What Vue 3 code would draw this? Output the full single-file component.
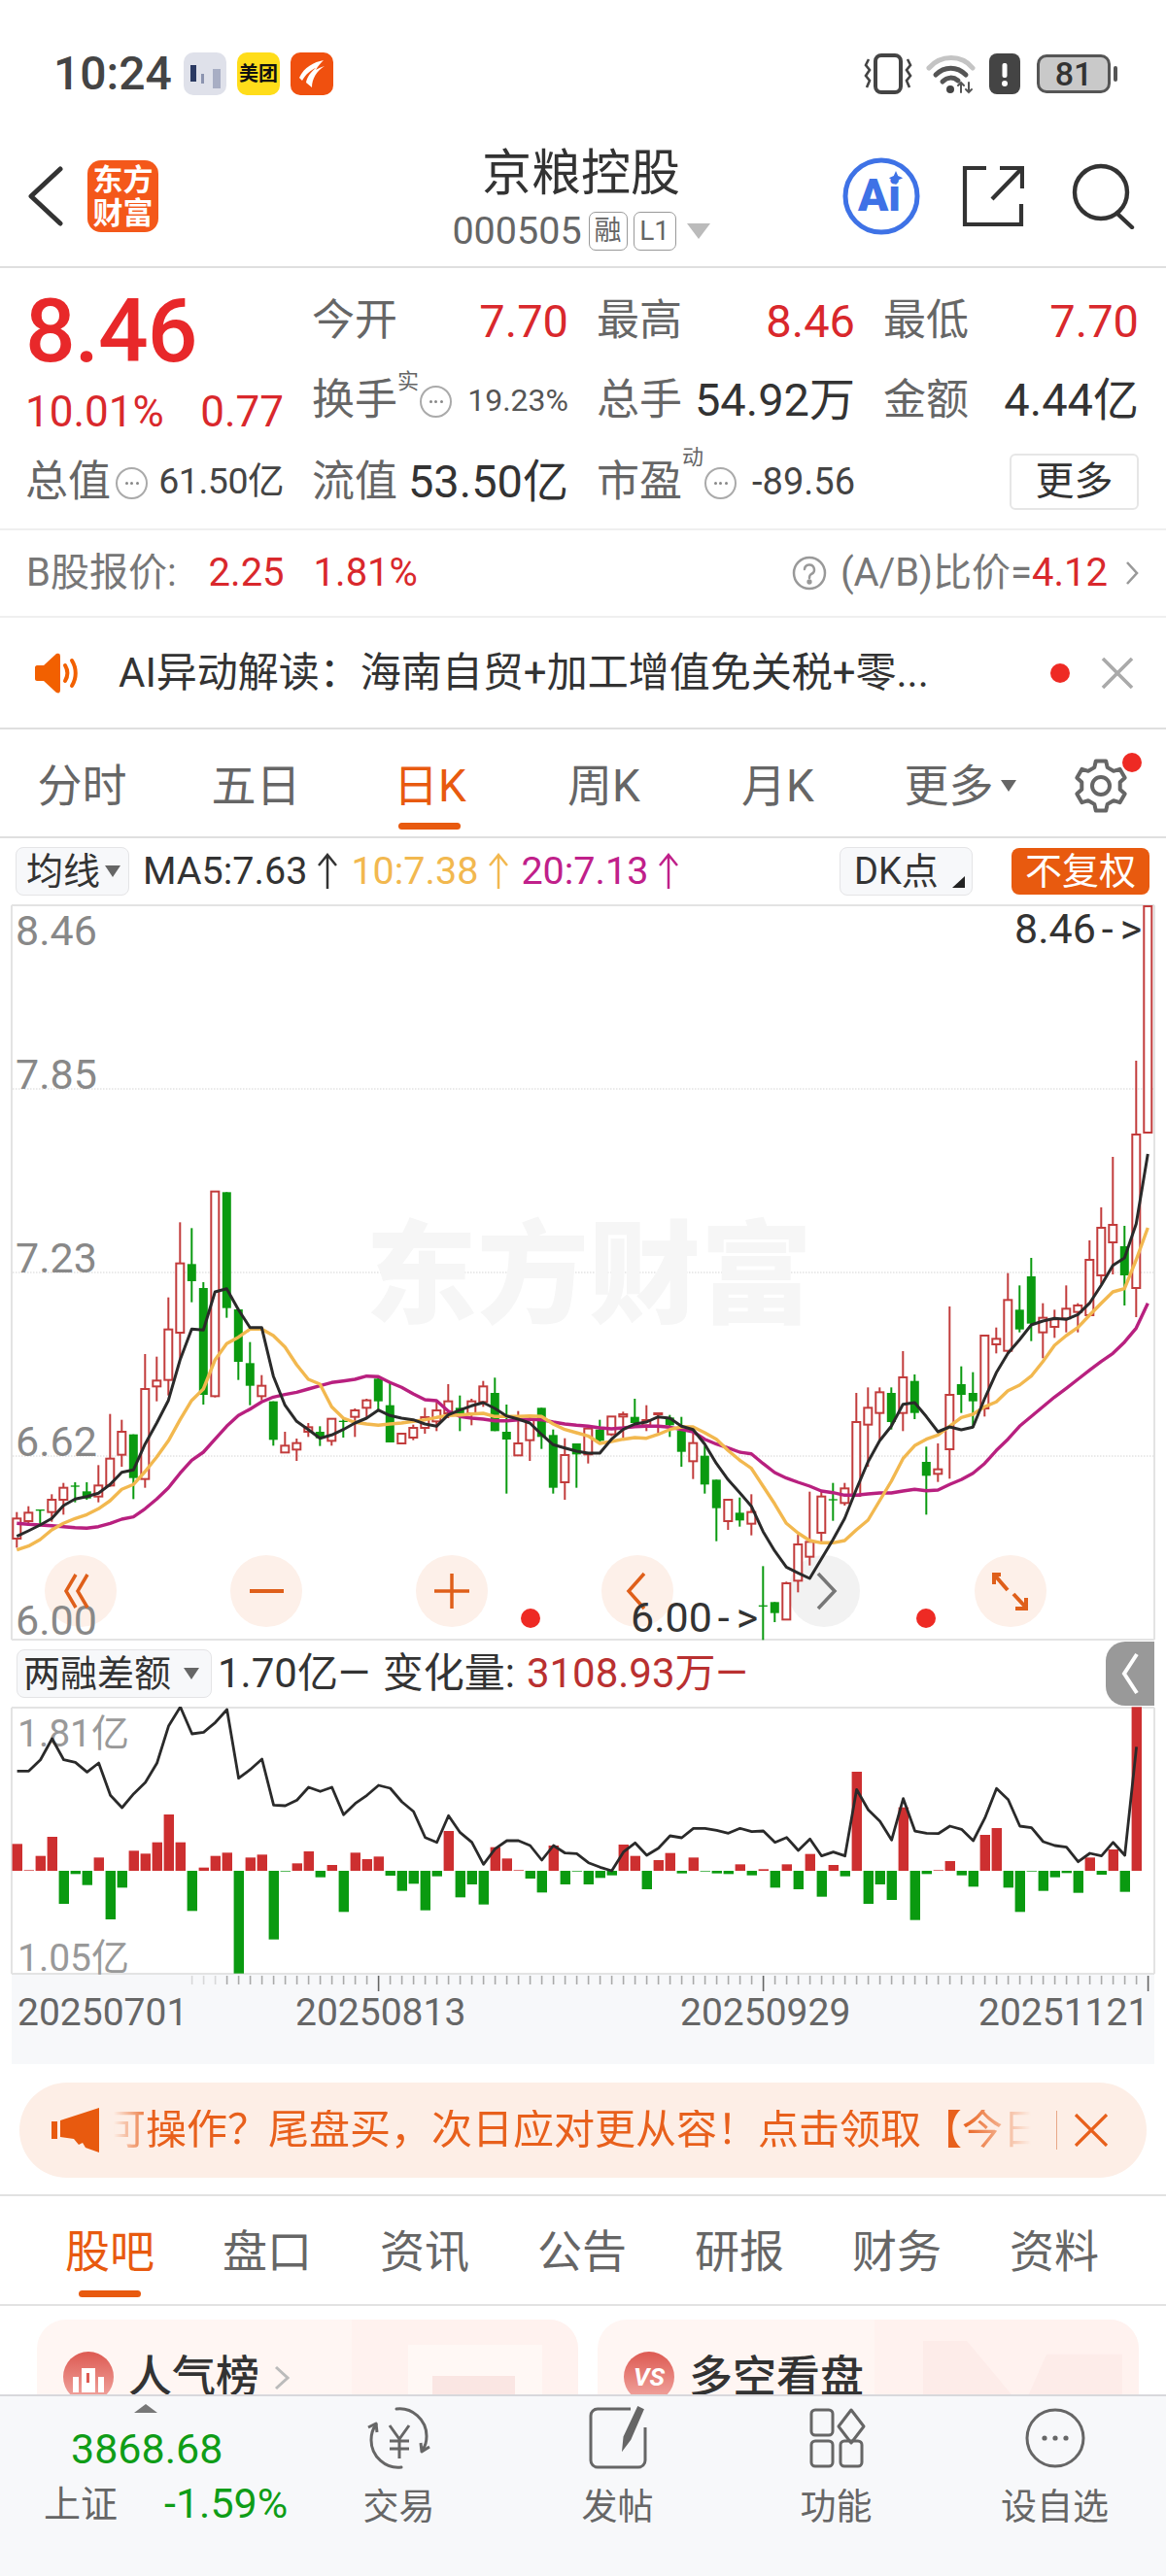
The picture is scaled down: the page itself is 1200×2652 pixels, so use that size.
<script setup>
const seg8 = [
  ['r',1010,1030,1092,1120],['r',992,1012,1038,1052],['g',1002,1002,1006,1050],['r',955,972,1010,1040],
  ['r',920,935,972,1018],['g',918,928,932,980],['g',918,946,968,972],['r',865,928,962,980],
  ['r',707,845,928,932],['r',725,762,833,870],['g',770,770,905,970],['r',522,630,908,935],
  ['r',530,604,622,668],['r',347,446,602,650],['r',115,242,456,540],['g',133,244,297,362],
  ['g',300,318,648,678],['r',20,20,652,656],['g',22,22,380,410],['g',380,384,546,602],
  ['g',485,550,620,680],['r',587,620,652,665],['g',668,668,787,805],['r',762,805,826,826],
  ['r',783,797,817,852],['r',735,748,762,778],['g',745,762,782,806],['r',722,722,790,805],
  ['g',722,728,732,780],['r',690,696,716,778],['r',660,665,688,720],['g',595,598,668,700],
  ['g',610,680,795,795]
]
const seg9 = [
  ['r',348,348,378,378],['r',320,330,360,368],['r',268,297,330,348],['r',250,276,310,340],
  ['r',195,248,285,300],['g',230,268,285,340],['r',240,248,285,322],['r',185,202,250,265],
  ['g',175,222,340,340],['g',258,342,366,533],['r',278,378,415,415],['r',290,305,368,432],
  ['g',268,268,358,395],['g',335,352,515,533],['r',362,414,498,552],['g',378,378,412,515],
  ['r',330,332,412,440],['g',305,335,370,375],['r',295,295,350,355],['r',280,288,295,360],
  ['g',240,296,315,330],['r',260,306,322,340],['r',285,285,288,345],['g',290,298,322,358],
  ['g',296,338,404,450],['r',335,377,433,488],['g',385,416,505,533],['g',490,490,578,680],
  ['r',552,552,618,645],['g',545,592,616,635],['r',535,590,626,662],['g',757,878,882,985]
]
const seg10 = [
  ['g',1108,1108,1142,1170],['r',1045,1050,1162,1162],['r',900,930,1042,1078],['r',767,922,968,995],
  ['r',768,782,894,925],['g',740,790,794,857],['r',740,757,802,810],['r',462,552,780,780],
  ['r',445,508,560,690],['r',445,460,524,610],['g',445,462,552,575],['r',333,414,524,580],
  ['g',405,425,524,543],['g',628,675,718,838],['r',618,698,712,737],['r',195,468,636,727],
  ['g',380,435,468,524],['g',398,462,488,570],['r',285,285,510,535],['r',260,295,312,340],
  ['r',92,175,332,340],['g',130,205,266,275],['g',45,102,248,302],['r',185,230,275,355],
  ['r',205,235,258,292],['r',130,202,232,275],['r',185,192,212,275]
]
const rawEnd = [
  ['r',1277,1297,1354,1354],['r',1243,1264,1313,1322],['r',1191,1261,1279,1312],['g',1262,1283,1313,1344],
  ['r',1092,1168,1326,1356],['r',933,933,1166,1166]
]
const conv = (list, off) => list.map(c => [c[0], off + c[1] / 3, off + c[2] / 3, off + c[3] / 3, off + c[4] / 3])
const candles = [...conv(seg8, 1220), ...conv(seg9, 1360), ...conv(seg10, 1280), ...rawEnd].map((c, i) => ({
  up: c[0] === 'r', x: 17.3 + 12 * i, wt: c[1], bt: c[2], bb: c[3], wb: c[4]
}))

const line = (a, b, c) => [
  ...a.map(v => 1220 + v / 3), ...b.map(v => 1360 + v / 3), ...c.map(v => 1280 + v / 3)
].map((y, i) => `${(17.3 + 12 * i).toFixed(1)},${y.toFixed(1)}`).join(' ')

const ma5 = line(
  [1085,1068,1050,1030,990,970,962,952,925,887,880,800,735,665,540,445,448,330,320,385,440,440,590,680,730,755,782,772,755,735,720,695,712],
  [300,305,318,325,290,275,262,252,270,293,303,315,350,382,392,402,408,408,365,335,318,312,296,300,325,335,380,440,490,530,572,650],
  [950,1000,1018,1035,975,915,850,760,675,610,565,497,492,535,582,567,576,568,480,400,340,298,252,240,232,235,220,185,130,68,45,-60,-276]
)
const ma10 = line(
  [1127,1115,1095,1065,1045,1030,1018,1000,975,940,925,885,840,790,725,665,630,540,490,470,445,445,465,500,555,600,615,685,720,733,738,742,738],
  [315,310,305,298,292,290,287,285,295,295,295,293,295,318,335,345,355,378,372,365,360,362,350,335,327,327,345,365,400,430,455,510],
  [805,865,895,918,925,925,918,885,855,795,735,665,625,605,592,565,538,528,505,490,455,438,410,365,315,285,260,222,185,150,140,51,-48]
)
const ma20 = line(
  [1045,1048,1050,1052,1055,1058,1060,1055,1045,1032,1025,1000,970,935,890,850,825,785,745,712,692,670,655,647,640,630,620,610,605,600,590,592,610],
  [205,225,243,246,278,295,300,303,308,308,305,303,305,312,318,322,325,330,333,330,326,325,325,328,335,342,365,380,392,405,410,440],
  [708,725,738,750,765,770,778,778,774,771,771,765,760,764,762,745,730,710,680,640,605,565,535,505,475,448,420,392,365,340,305,262,185]
)

const barVals = [83,2,46,105,-102,-10,-44,41,-150,-52,62,53,88,174,88,-124,10,46,56,-317,41,50,-212,-2,23,60,-20,18,-127,56,36,44,-15,-62,-40,-122,-17,123,-82,-42,-104,73,38,2,-24,-67,78,-42,-2,-42,-22,-14,81,46,-57,33,55,-8,41,-2,-8,-10,20,-14,5,-52,20,-57,52,-80,18,-17,306,-102,-42,-90,196,-152,-10,2,30,-14,-49,111,132,-52,-127,-2,-62,-20,-7,-68,41,-12,66,-65,506]
const bars = barVals.map((v, i) => ({
  x: 12.6 + 12 * i, y: v > 0 ? 1926 - v / 3 : 1926, h: Math.abs(v) / 3, up: v > 0
}))
const lowY = [430,430,395,330,395,403,433,405,505,543,500,465,405,290,232,315,310,280,240,452,425,393,535,537,520,480,493,480,565,530,505,474,483,525,555,635,650,568,620,650,718,670,645,645,660,705,660,683,685,713,727,738,680,652,690,668,630,636,607,607,613,622,607,617,615,650,635,675,640,692,680,692,487,550,585,643,515,615,622,623,600,610,645,575,484,518,600,605,648,660,665,710,684,692,650,690,355]
const lowLine = lowY.map((v, i) => `${(17.6 + 12 * i).toFixed(1)},${(1680 + v / 3).toFixed(1)}`).join(' ')

const ticks = Array.from({ length: 83 }, (_, k) => {
  const i = k + 15
  const major = i === 31 || i === 64 || i === 97
  return { x: 17.6 + 12 * i, major, faded: i < 18 }
})

const gearPath = (() => {
  const n = 6, cx = 30, cy = 30, ro = 26, ri = 20
  const pts = []
  for (let k = 0; k < n; k++) {
    const a = (k * 2 * Math.PI) / n - Math.PI / 2
    const w1 = 0.2, w2 = 0.34
    pts.push([a - w2, ri], [a - w1, ro], [a + w1, ro], [a + w2, ri])
  }
  return 'M' + pts.map(p => `${(cx + p[1] * Math.cos(p[0])).toFixed(1)} ${(cy + p[1] * Math.sin(p[0])).toFixed(1)}`).join('L') + 'Z'
})()

const klineTabs = ['分时', '五日', '日K', '周K', '月K']
const infoTabs = ['股吧', '盘口', '资讯', '公告', '研报', '财务', '资料']
const navs = ['交易', '发帖', '功能', '设自选']
const zoomButtons = [83, 274, 465, 656, 848, 1040]
</script>

<template>
  <div class="page">
    <!-- status bar -->
    <div class="status">
      <span class="time">10:24</span>
      <svg class="app" width="44" height="44" viewBox="0 0 44 44">
        <rect width="44" height="44" rx="10" fill="#dfe1ea"/>
        <rect x="7" y="13" width="6" height="17" fill="#2b3a63"/>
        <rect x="18" y="22" width="3" height="10" fill="#8c94b0"/>
        <rect x="30" y="17" width="8" height="20" fill="#a8aec4"/>
      </svg>
      <span class="app app-mt">美团</span>
      <svg class="app" width="44" height="44" viewBox="0 0 44 44">
        <rect width="44" height="44" rx="10" fill="#f0500f"/>
        <path d="M34 8C24 10 14 15 9 26l3 3c4-7 9-11 14-13-5 4-9 9-10 15l6 5c0-9 5-17 13-22-4 1-7 3-9 4 2-4 5-7 8-10z" fill="#fff"/>
      </svg>
      <span class="status-fill"></span>
      <svg width="50" height="42" viewBox="0 0 50 42" fill="none" stroke="#444" stroke-width="3.2">
        <rect x="12" y="2" width="26" height="38" rx="6" stroke-width="4"/>
        <path d="M5 6 2 12l4 5-4 6 4 5-3 7M45 6l3 6-4 5 4 6-4 5 3 7" stroke-width="2.6"/>
      </svg>
      <svg class="wifi" width="52" height="42" viewBox="0 0 52 42" fill="none" stroke-linecap="round">
        <path d="M3 15C15 1 37 1 48 15" stroke="#c4c4c4" stroke-width="5"/>
        <path d="M10 22c9-9 22-9 31 0" stroke="#555" stroke-width="5"/>
        <path d="M17 29c5-5 11-5 16-1" stroke="#555" stroke-width="5"/>
        <circle cx="25" cy="37" r="4" fill="#444"/>
        <path d="M36 40V30M44 30v10M33 33l3-3 3 3M41 37l3 3 3-3" stroke="#555" stroke-width="2"/>
      </svg>
      <svg class="alert" width="34" height="42" viewBox="0 0 34 42">
        <path d="M9 0h16a8 8 0 0 1 8 8v26a8 8 0 0 1-8 8H9a8 8 0 0 1-8-8V8a8 8 0 0 1 8-8z" fill="#444"/>
        <rect x="14.5" y="10" width="5" height="15" rx="2" fill="#fff"/>
        <circle cx="17" cy="31" r="3" fill="#fff"/>
      </svg>
      <span class="battery"><span class="battery-num">81</span></span>
      <span class="battery-nub"></span>
    </div>

    <!-- header -->
    <header class="header">
      <div class="header-left">
        <svg width="40" height="62" viewBox="0 0 40 62" fill="none" stroke="#333" stroke-width="5" stroke-linecap="round" stroke-linejoin="round"><path d="M35 3 5 31l30 28"/></svg>
        <div class="logo"><span>东方</span><span>财富</span></div>
      </div>
      <div class="header-mid">
        <div class="title">京粮控股</div>
        <div class="sub">
          <span>000505</span>
          <span class="tag tag-a">融</span>
          <span class="tag">L1</span>
          <span class="tri-down"></span>
        </div>
      </div>
      <div class="header-right">
        <svg width="82" height="82" viewBox="0 0 82 82">
          <circle cx="41" cy="41" r="37" fill="none" stroke="#3e72e6" stroke-width="5"/>
          <text x="17" y="56" class="ai">Ai</text>
          <path d="M56 15l2.2 5 5 2.2-5 2.2-2.2 5-2.2-5-5-2.2 5-2.2z" fill="#3e72e6"/>
        </svg>
        <svg class="share" width="64" height="64" viewBox="0 0 64 64" fill="none" stroke="#333" stroke-width="4.2">
          <path d="M25 3H3v58h58V40"/>
          <path d="M31 35 61 4M39 3h23v21"/>
        </svg>
        <svg class="search" width="66" height="68" viewBox="0 0 66 68" fill="none" stroke="#333" stroke-width="4.4" stroke-linecap="round">
          <circle cx="30" cy="30" r="27"/>
          <path d="M47 52l15 14"/>
        </svg>
      </div>
    </header>

    <!-- quote -->
    <section class="quote">
      <div class="price"><span>8.46</span></div>
      <div class="cell"><span class="lb">今开</span><span class="val red">7.70</span></div>
      <div class="cell"><span class="lb">最高</span><span class="val red">8.46</span></div>
      <div class="cell"><span class="lb">最低</span><span class="val red">7.70</span></div>

      <div class="cell change"><span class="red">10.01%</span><span class="red">0.77</span></div>
      <div class="cell">
        <span class="lb-wrap"><span class="lb">换手</span><sup class="sup">实</sup><span class="dots"><i></i><i></i><i></i></span></span>
        <span class="small">19.23%</span>
      </div>
      <div class="cell"><span class="lb">总手</span><span class="val dark">54.92万</span></div>
      <div class="cell"><span class="lb">金额</span><span class="val dark">4.44亿</span></div>

      <div class="cell">
        <span class="lb-wrap"><span class="lb">总值</span><span class="dots tight"><i></i><i></i><i></i></span></span>
        <span class="small mv">61.50亿</span>
      </div>
      <div class="cell"><span class="lb">流值</span><span class="val dark">53.50亿</span></div>
      <div class="cell">
        <span class="lb-wrap"><span class="lb">市盈</span><sup class="sup up">动</sup><span class="dots"><i></i><i></i><i></i></span></span>
        <span class="small pe">-89.56</span>
      </div>
      <div class="cell end"><span class="more">更多</span></div>
    </section>

    <!-- B share -->
    <section class="bshare">
      <span class="b-label">B股报价:</span>
      <span class="b-val">2.25</span>
      <span class="b-val b-pct">1.81%</span>
      <span class="spring"></span>
      <svg width="36" height="36" viewBox="0 0 36 36" fill="none" stroke="#999" stroke-width="2.5"><circle cx="18" cy="18" r="16"/><path d="M13 14a5 5 0 1 1 7 5c-2 1-2 2-2 4" stroke-linecap="round"/><circle cx="18" cy="27" r="1.4" fill="#999"/></svg>
      <span class="b-label b-ratio">(A/B)比价=</span><span class="b-val b-r">4.12</span>
      <svg class="b-chev" width="14" height="26" viewBox="0 0 14 26" fill="none" stroke="#999" stroke-width="2.6"><path d="M2 2l10 11L2 24"/></svg>
    </section>

    <!-- AI notice -->
    <section class="ainote">
      <svg width="50" height="42" viewBox="0 0 50 42" fill="#f26000">
        <path d="M2 13h7L22 1c3-1 4 0 4 3v34c0 3-1 4-4 3L9 29H2c-1 0-2-1-2-2V15c0-1 1-2 2-2z"/>
        <path d="M31 13c3 5 3 11 0 16M38 8c5 8 5 18 0 26" fill="none" stroke="#f26000" stroke-width="4" stroke-linecap="round"/>
      </svg>
      <span class="ai-text">AI异动解读：海南自贸+加工增值免关税+零...</span>
      <span class="spring"></span>
      <span class="red-dot"></span>
      <svg class="ai-x" width="34" height="32" viewBox="0 0 34 32" stroke="#aaa" stroke-width="3.6"><path d="M2 1l30 30M32 1 2 31"/></svg>
    </section>

    <!-- kline tabs -->
    <nav class="tabs">
      <span v-for="(t, i) in klineTabs" :key="t" class="tab" :class="{ on: i === 2 }">{{ t }}</span>
      <span class="tab more-tab">更多<i class="tri-small"></i></span>
      <span class="gear">
        <svg width="60" height="60" viewBox="0 0 60 60" fill="none" stroke="#666" stroke-width="4" stroke-linejoin="round">
          <path :d="gearPath"/><circle cx="30" cy="30" r="9"/>
        </svg>
        <span class="gear-dot"></span>
      </span>
    </nav>

    <!-- MA row -->
    <div class="ma-row">
      <span class="pick">均线<i class="tri-small dk"></i></span>
      <span class="ma ma-k">MA5:7.63<svg class="up-arrow" width="24" height="40" viewBox="0 0 24 40" fill="none" stroke="currentColor" stroke-width="2.5"><path d="M12 38V4M3 14l9-11 9 11"/></svg></span>
      <span class="ma ma-o">10:7.38<svg class="up-arrow" width="24" height="40" viewBox="0 0 24 40" fill="none" stroke="currentColor" stroke-width="2.5"><path d="M12 38V4M3 14l9-11 9 11"/></svg></span>
      <span class="ma ma-m">20:7.13<svg class="up-arrow" width="24" height="40" viewBox="0 0 24 40" fill="none" stroke="currentColor" stroke-width="2.5"><path d="M12 38V4M3 14l9-11 9 11"/></svg></span>
      <span class="spring"></span>
      <span class="pick dk-btn">DK点<i class="corner"></i></span>
      <span class="fq">不复权</span>
    </div>

    <!-- main chart -->
    <svg class="chart" width="1200" height="758" viewBox="0 931 1200 758">
      <path d="M12 932H1188M12 932V1688M1188 932V1688M12 1688H1188" fill="none" stroke="#e3e3e3" stroke-width="2"/>
      <g stroke="#d4d4d4" stroke-width="1" stroke-dasharray="1.5 1.5">
        <path d="M13 1121H1187M13 1310H1187M13 1499H1187"/>
      </g>
      <text x="376" y="1353" class="wm">东方财富</text>
      <text x="16" y="973" class="yl">8.46</text>
      <text x="16" y="1121" class="yl">7.85</text>
      <text x="16" y="1310" class="yl">7.23</text>
      <text x="16" y="1499" class="yl">6.62</text>
      <g>
        <circle v-for="(cx, i) in zoomButtons" :key="cx" :cx="cx" cy="1638" r="37" :fill="i === 4 ? '#f2f2f2' : '#fdf0e9'"/>
      </g>
      <text x="16" y="1683" class="yl">6.00</text>
      <g fill="none" stroke="#df5f1a" stroke-width="3.5">
        <path d="M78 1621 68 1638l10 17M90 1621 80 1638l10 17"/>
        <path d="M257 1638h35" stroke-width="4"/>
        <path d="M447 1638h36M465 1620v36"/>
        <path d="M663 1620 647 1638l16 18"/>
        <path d="M1023 1622v-1l7 0M1023 1621v10M1024 1622l13 15M1043 1641l13 14M1056 1645v11h-11" stroke-width="4"/>
      </g>
      <path d="M842 1620l17 18-17 18" fill="none" stroke="#777" stroke-width="3.5"/>
      <g v-for="(c, i) in candles" :key="i" :stroke="c.up ? '#c23c3c' : '#0a9a10'">
        <line :x1="c.x" :x2="c.x" :y1="c.wt" :y2="c.wb" stroke-width="2"/>
        <rect v-if="c.up" :x="c.x - 4" :y="c.bt" width="8" :height="c.bb - c.bt" fill="#fff" stroke-width="2"/>
        <rect v-else :x="c.x - 4.5" :y="c.bt" width="9" :height="c.bb - c.bt" fill="#0a9a10" stroke-width="0"/>
      </g>
      <polyline :points="ma20" fill="none" stroke="#b8207f" stroke-width="3.4" stroke-linejoin="round"/>
      <polyline :points="ma10" fill="none" stroke="#f2b84f" stroke-width="3.4" stroke-linejoin="round"/>
      <polyline :points="ma5" fill="none" stroke="#2a2a2a" stroke-width="3" stroke-linejoin="round"/>
      <circle cx="546" cy="1666" r="10" fill="#ee2a24"/>
      <circle cx="953" cy="1666" r="10" fill="#ee2a24"/>
      <text x="1044" y="971" class="tip">8.46<tspan dx="6">-</tspan><tspan dx="7">&gt;</tspan></text>
      <text x="649" y="1680" class="tip">6.00<tspan dx="6">-</tspan><tspan dx="7">&gt;</tspan></text>
    </svg>

    <!-- indicator row -->
    <div class="ind-row">
      <span class="pick wide">两融差额<i class="tri-small dk"></i></span>
      <span class="ind-txt">1.70亿—</span>
      <span class="ind-txt ind-lab">变化量:</span>
      <span class="ind-txt ind-red">3108.93万—</span>
      <span class="spring"></span>
      <span class="handle">
        <svg width="20" height="44" viewBox="0 0 20 44" fill="none" stroke="#fff" stroke-width="4"><path d="M17 2 4 22l13 20"/></svg>
      </span>
    </div>

    <!-- lower chart + axis -->
    <svg class="low" width="1200" height="368" viewBox="0 1757 1200 368">
      <path d="M12 1758H1188M12 1758V2032M1188 1758V2032M12 2032H1188" fill="none" stroke="#e3e3e3" stroke-width="2"/>
      <text x="18" y="1798" class="lowl">1.81亿</text>
      <text x="18" y="2029" class="lowl">1.05亿</text>
      <rect v-for="(b, i) in bars" :key="i" :x="b.x" :y="b.y" width="10.4" :height="b.h" :fill="b.up ? '#cd2f30' : '#0a9a10'"/>
      <polyline :points="lowLine" fill="none" stroke="#2a2a2a" stroke-width="2.8" stroke-linejoin="round"/>
      <rect x="12" y="2033" width="1176" height="92" fill="#f7f8fa"/>
      <g>
        <line v-for="t in ticks" :key="t.x" :x1="t.x" :x2="t.x" y1="2034" :y2="t.major ? 2050 : 2043"
          :stroke="t.major ? '#666' : '#aaa'" stroke-width="1.6" :opacity="t.faded ? 0.4 : 1"/>
      </g>
      <text x="18" y="2085" class="date">20250701</text>
      <text x="304" y="2085" class="date">20250813</text>
      <text x="700" y="2085" class="date">20250929</text>
      <text x="1007" y="2085" class="date">20251121</text>
    </svg>

    <!-- banner -->
    <div class="banner-wrap">
      <div class="banner">
        <svg class="horn" width="52" height="46" viewBox="0 0 52 46" fill="#e85a0f">
          <rect x="1" y="14" width="6" height="18"/>
          <path d="M10 13 50 0v46l-14-5-3-5-4 2-5-6-14-2z"/>
        </svg>
        <span class="banner-clip"><span class="banner-text">可操作？尾盘买，次日应对更从容！点击领取【今日</span></span>
        <span class="banner-sep"></span>
        <svg width="36" height="34" viewBox="0 0 36 34" stroke="#e8601c" stroke-width="3.2"><path d="M2 1l32 32M34 1 2 33"/></svg>
      </div>
    </div>

    <!-- info tabs -->
    <nav class="tabs2">
      <span v-for="(t, i) in infoTabs" :key="t" class="tab2" :class="{ on: i === 0 }">{{ t }}</span>
    </nav>

    <!-- cards -->
    <div class="cards">
      <div class="card">
        <i class="deco d1"></i><i class="deco d2"></i><i class="deco d3"></i>
        <svg class="card-ic" width="52" height="52" viewBox="0 0 52 52">
          <defs><linearGradient id="cg1" x1="0" y1="0" x2="0" y2="1"><stop offset="0" stop-color="#dd5a52"/><stop offset="1" stop-color="#f2aaa4"/></linearGradient></defs>
          <circle cx="26" cy="26" r="26" fill="url(#cg1)"/>
          <path d="M10 26h6v16h-6zM19 17h14v25H19zM36 26h6v16h-6z" fill="#fff"/>
          <path d="M24 22h3v10h-3z" fill="#dd5a52"/>
        </svg>
        <span class="card-t">人气榜</span>
        <svg width="16" height="26" viewBox="0 0 16 26" fill="none" stroke="#bbb" stroke-width="3"><path d="M2 2l12 11L2 24"/></svg>
      </div>
      <div class="card">
        <i class="deco d4"></i><i class="deco d5"></i>
        <svg class="card-ic" width="52" height="52" viewBox="0 0 52 52">
          <defs><linearGradient id="cg2" x1="0" y1="0" x2="0" y2="1"><stop offset="0" stop-color="#dd5a52"/><stop offset="1" stop-color="#f2aaa4"/></linearGradient></defs>
          <circle cx="26" cy="26" r="26" fill="url(#cg2)"/>
          <text x="26" y="35" text-anchor="middle" class="vs">VS</text>
        </svg>
        <span class="card-t">多空看盘</span>
      </div>
    </div>

    <!-- footer -->
    <footer class="footer">
      <div class="index">
        <i class="tri-up"></i>
        <div class="idx-price">3868.68</div>
        <div class="idx-row"><span class="idx-name">上证</span><span class="idx-pct">-1.59%</span></div>
      </div>
      <div v-for="(n, i) in navs" :key="n" class="nav">
        <svg width="70" height="70" viewBox="0 0 70 70" fill="none" stroke="#666" stroke-width="3">
          <g v-if="i === 0">
            <path d="M32 5C48 3 63 16 63 33c0 5-1 10-4 14" stroke-linecap="round"/>
            <path d="M37 65C21 67 6 54 6 37c0-6 2-12 5-16" stroke-linecap="round"/>
            <path d="M3 24l8-4 1 9M66 44l-8 5-1-9" stroke-linejoin="round"/>
            <path d="M25 22l10 14 10-14M25 38h20M25 46h20M35 36v20" />
          </g>
          <g v-else-if="i === 1">
            <path d="M48 5H14a7 7 0 0 0-7 7v46a7 7 0 0 0 7 7h42a7 7 0 0 0 7-7V24"/>
            <path d="M60 6 47 36l-6 8 1-10L56 4z" fill="#666"/>
          </g>
          <g v-else-if="i === 2">
            <rect x="9" y="6" width="22" height="26" rx="4"/>
            <path d="M50 6l13 17-13 17-13-17z" stroke-linejoin="round"/>
            <rect x="9" y="38" width="22" height="26" rx="4"/>
            <rect x="39" y="38" width="22" height="26" rx="4"/>
          </g>
          <g v-else>
            <circle cx="35" cy="35" r="29"/>
            <circle cx="24" cy="35" r="2.6" fill="#666" stroke="none"/>
            <circle cx="35" cy="35" r="2.6" fill="#666" stroke="none"/>
            <circle cx="46" cy="35" r="2.6" fill="#666" stroke="none"/>
          </g>
        </svg>
        <span class="nav-label">{{ n }}</span>
      </div>
    </footer>
  </div>
</template>

<style scoped>
.page {
  width: 1200px;
  height: 2652px;
  overflow: hidden;
  background: #fff;
  display: flex;
  flex-direction: column;
  font-family: Roboto, "Noto Sans CJK SC", sans-serif;
  line-height: 1;
  color: #333;
}
.page * { box-sizing: border-box; }
.spring { flex: 1; }
.red { color: #d9282c; }

/* status */
.status {
  height: 130px;
  flex: none;
  display: flex;
  align-items: center;
  padding: 22px 50px 0 55px;
}
.time { font-size: 48px; font-weight: 500; color: #444; width: 134px; }
.app { flex: none; margin-right: 11px; }
.app-mt {
  width: 44px; height: 44px; border-radius: 10px;
  background: #ffdd1a; color: #111; font-size: 20px; font-weight: 700;
  display: flex; align-items: center; justify-content: center;
}
.status-fill { flex: 1; }
.wifi { margin-left: 14px; }
.alert { margin-left: 12px; }
.battery {
  width: 76px; height: 40px; margin-left: 16px;
  border: 3.5px solid #555; border-radius: 10px;
  background: #c9c9c9; display: flex; align-items: center; justify-content: center;
}
.battery-num { font-size: 34px; font-weight: 500; color: #333; }
.battery-nub { width: 4px; height: 16px; background: #555; margin-left: 3px; border-radius: 2px; }

/* header */
.header {
  height: 146px;
  flex: none;
  display: grid;
  grid-template-columns: 1fr auto 1fr;
  align-items: center;
  border-bottom: 2px solid #dfdfdf;
  padding: 0 31px 0 27px;
}
.header-left { display: flex; align-items: center; gap: 23px; }
.logo {
  width: 73px; height: 74px; border-radius: 14px; background: #f4581a;
  color: #fff; font-size: 31px; font-weight: 700;
  display: flex; flex-direction: column; align-items: center; justify-content: center; gap: 3px;
}
.header-mid { display: flex; flex-direction: column; align-items: center; margin-top: 6px; }
.title { font-size: 51px; color: #333; }
.sub { display: flex; align-items: center; margin-top: 14px; font-size: 39.5px; color: #666; }
.tag {
  border: 1.5px solid #999; border-radius: 7px; height: 40px; min-width: 44px;
  display: flex; align-items: center; justify-content: center;
  font-size: 28px; margin-left: 6px; color: #666;
}
.tag-a { min-width: 40px; margin-left: 7px; }
.tri-down {
  width: 0; height: 0; margin-left: 11px;
  border-left: 12px solid transparent; border-right: 12px solid transparent; border-top: 16px solid #bbb;
}
.header-right { display: flex; align-items: center; justify-content: flex-end; }
.header-right .share { margin-left: 42px; }
.header-right .search { margin-left: 49px; }
.ai { font-size: 46px; font-weight: 900; fill: #3e72e6; }

/* quote */
.quote {
  height: 270px;
  flex: none;
  display: grid;
  grid-template-columns: 266px 264px 266px 263px;
  grid-template-rows: 80px 83px 85px;
  column-gap: 29px;
  padding: 14px 0 0 26px;
  border-bottom: 2px solid #efefef;
}
.cell { display: flex; align-items: center; justify-content: space-between; min-width: 0; }
.cell.end { justify-content: flex-end; }
.price { font-size: 91px; font-weight: 500; color: #e8282a; letter-spacing: -1px; padding-top: 6px; }
.change { font-size: 44px; padding-top: 24px; }
.lb { font-size: 44px; color: #666; }
.lb-wrap { display: flex; align-items: center; position: relative; }
.val { font-size: 47px; }
.val.dark { color: #333; }
.sup { font-size: 22px; color: #666; align-self: flex-start; margin-top: -8px; line-height: 1; }
.sup.up { margin-top: -14px; }
.dots {
  width: 33px; height: 33px; border-radius: 50%; border: 2.5px solid #aaa;
  display: flex; align-items: center; justify-content: center; gap: 2.5px; margin-left: 1px; margin-top: 4px;
}
.dots.tight { margin-left: 5px; }
.dots i { width: 3px; height: 3px; border-radius: 50%; background: #888; }
.small { font-size: 32px; color: #555; }
.small.mv { font-size: 37.5px; letter-spacing: -0.5px; color: #444; }
.small.pe { font-size: 38px; color: #444; }
.more {
  width: 133px; height: 58px; border: 2px solid #e6e6e6; border-radius: 6px;
  font-size: 40px; color: #333; display: flex; align-items: center; justify-content: center;
}

/* b share */
.bshare {
  height: 90px;
  flex: none;
  display: flex;
  align-items: center;
  padding: 0 28px 0 27px;
  border-bottom: 2px solid #efefef;
}
.b-label { font-size: 40px; color: #777; }
.b-val { font-size: 40px; color: #d9282c; margin-left: 33px; }
.b-pct { margin-left: 30px; }
.b-ratio { margin-left: 14px; }
.b-r { margin-left: 0; }
.b-chev { margin-left: 18px; }

/* AI note */
.ainote {
  height: 115px;
  flex: none;
  display: flex;
  align-items: center;
  padding: 0 33px 0 36px;
  border-bottom: 2px solid #dfdfdf;
}
.ai-text { font-size: 42px; color: #333; margin-left: 36px; }
.red-dot { width: 20px; height: 20px; border-radius: 50%; background: #ee2a24; }
.ai-x { margin-left: 32px; }

/* tabs */
.tabs {
  height: 112px;
  flex: none;
  display: flex;
  align-items: center;
  border-bottom: 2px solid #dfdfdf;
  padding: 5px 0 0 0;
  margin-left: -5px;
}
.tab { width: 179px; text-align: center; font-size: 46px; color: #666; position: relative; }
.tab.on { color: #e85a0f; }
.tab.on::after {
  content: ""; position: absolute; left: 57px; bottom: -22px;
  width: 64px; height: 7px; border-radius: 4px; background: #e85a0f;
}
.more-tab { display: flex; align-items: center; justify-content: center; margin-left: 3px; width: 190px; }
.tri-small {
  display: inline-block; width: 0; height: 0; margin-left: 7px;
  border-left: 8px solid transparent; border-right: 8px solid transparent; border-top: 12px solid #666;
}
.gear { position: relative; margin-left: 20px; display: flex; }
.gear-dot {
  position: absolute; right: -12px; top: -4px; width: 20px; height: 20px;
  border-radius: 50%; background: #ee2a24;
}

/* MA row */
.ma-row {
  height: 68px;
  flex: none;
  display: flex;
  align-items: center;
  padding: 0 17px 0 16px;
}
.pick {
  height: 50px; width: 117px; border: 1.5px solid #e4e4e6; border-radius: 8px; background: #f7f8fa;
  font-size: 38px; color: #333; display: flex; align-items: center; padding-left: 10px; flex: none;
  position: relative;
}
.tri-small.dk { margin-left: 5px; border-top-color: #666; }
.ma { font-size: 39.5px; display: flex; align-items: center; }
.ma-k { color: #333; margin-left: 14px; }
.ma-o { color: #f2b84f; margin-left: 12px; }
.ma-m { color: #c0208a; margin-left: 11px; }
.up-arrow { margin-left: 9px; }
.dk-btn { width: 137px; padding-left: 14px; margin-right: 40px; }
.corner {
  position: absolute; right: 7px; bottom: 7px; width: 0; height: 0;
  border-left: 13px solid transparent; border-bottom: 12px solid #222;
}
.fq {
  width: 142px; height: 48px; border-radius: 8px; background: #e85a0f; color: #fff;
  font-size: 38px; display: flex; align-items: center; justify-content: center;
}

/* chart */
.chart, .low { display: block; flex: none; }
.yl { font-size: 43px; fill: #888; }
.tip { font-size: 43px; fill: #333; }
.wm { font-size: 115px; font-weight: 900; fill: #f6f6f6; }
.lowl { font-size: 39px; fill: #999; }
.date { font-size: 39px; fill: #666; }

/* ind row */
.ind-row {
  height: 68px;
  flex: none;
  display: flex;
  align-items: center;
  padding-left: 17px;
  position: relative;
}
.pick.wide { width: 201px; padding-left: 6px; }
.pick.wide .tri-small { margin-left: 13px; }
.ind-txt { font-size: 42px; color: #333; margin-left: 6px; }
.ind-lab { margin-left: 13px; }
.ind-red { color: #b93030; margin-left: 12px; }
.handle {
  width: 50px; height: 66px; margin-right: 12px;
  background: #999; border-radius: 20px 0 0 20px;
  display: flex; align-items: center; justify-content: center;
}

/* banner */
.banner-wrap {
  height: 136px;
  flex: none;
  padding: 19px 20px;
  border-bottom: 2px solid #e2e2e2;
}
.banner {
  height: 98px; border-radius: 49px; background: #fdeee6;
  display: flex; align-items: center; padding-left: 32px;
}
.banner-clip {
  width: 956px; overflow: hidden; white-space: nowrap; margin-left: 7px; flex: none; padding-left: 0;
  -webkit-mask-image: linear-gradient(90deg, transparent 6px, #000 46px, #000 880px, transparent 950px);
  mask-image: linear-gradient(90deg, transparent 6px, #000 46px, #000 880px, transparent 950px);
}
.banner-text { font-size: 42px; color: #e8601c; margin-left: -3px; }
.banner-sep { width: 1px; height: 40px; background: #e8a888; margin-left: 20px; margin-right: 17px; }

/* info tabs */
.tabs2 {
  height: 113px;
  flex: none;
  display: flex;
  align-items: center;
  padding: 3px 0 0 32px;
  border-bottom: 2px solid #e2e2e2;
}
.tab2 { width: 162px; text-align: center; font-size: 46px; color: #666; position: relative; }
.tab2.on { color: #e85a0f; }
.tab2.on::after {
  content: ""; position: absolute; left: 49px; bottom: -24px;
  width: 64px; height: 7px; border-radius: 4px; background: #e85a0f;
}

/* cards */
.cards {
  height: 91px;
  flex: none;
  overflow: hidden;
  display: flex;
  gap: 20px;
  padding: 14px 30px 0 38px;
}
.card {
  width: 557px; height: 160px; flex: none;
  border-radius: 30px; background: #fff6f3; position: relative; overflow: hidden;
  display: flex; align-items: flex-start; padding: 30px 0 0 27px;
}
.card-ic { flex: none; position: relative; margin-top: 3px; }
.card-t { font-size: 45px; font-weight: 500; color: #333; margin-left: 15px; position: relative; margin-top: 7px; }
.card > svg:last-child { position: relative; margin: 17px 0 0 15px; }
.deco { position: absolute; display: block; }
.d1 { left: 324px; top: 0; right: 0; bottom: 0; background: #fff2ef; }
.d2 { left: 382px; top: 26px; width: 138px; bottom: 0; background: #fff8f5; }
.d3 { left: 407px; top: 58px; width: 85px; bottom: 0; background: #fae6e3; }
.d4 { left: 285px; top: 0; right: 0; bottom: 0; background: #fff2ef; }
.d5 { left: 335px; top: 22px; width: 205px; bottom: 0; background: #fdece9; clip-path: polygon(0 0, 22% 0, 50% 50%, 62% 10%, 100% 10%, 100% 100%, 0 100%); }
.vs { font-size: 26px; font-weight: 700; fill: #fff; font-style: italic; }

/* footer */
.footer {
  height: 187px;
  flex: none;
  display: flex;
  background: #f7f8fa;
  border-top: 2px solid #d8d8dc;
}
.index { width: 298px; flex: none; display: flex; flex-direction: column; position: relative; }
.tri-up {
  display: block; width: 0; height: 0; margin: 8px 0 0 138px;
  border-left: 12px solid transparent; border-right: 12px solid transparent; border-bottom: 9px solid #777;
}
.idx-price { font-size: 43px; color: #0f9d17; margin: 16px 0 0 73px; }
.idx-row { display: flex; align-items: center; padding-left: 45px; margin-top: 13px; }
.idx-name { font-size: 38px; color: #666; }
.idx-pct { font-size: 43px; color: #0f9d17; margin-left: 48px; }
.nav { width: 225px; flex: none; display: flex; flex-direction: column; align-items: center; padding-top: 8px; }
.nav-label { font-size: 37px; color: #666; margin-top: 18px; }
</style>

<style>
html, body { margin: 0; padding: 0; background: #fff; }
</style>
